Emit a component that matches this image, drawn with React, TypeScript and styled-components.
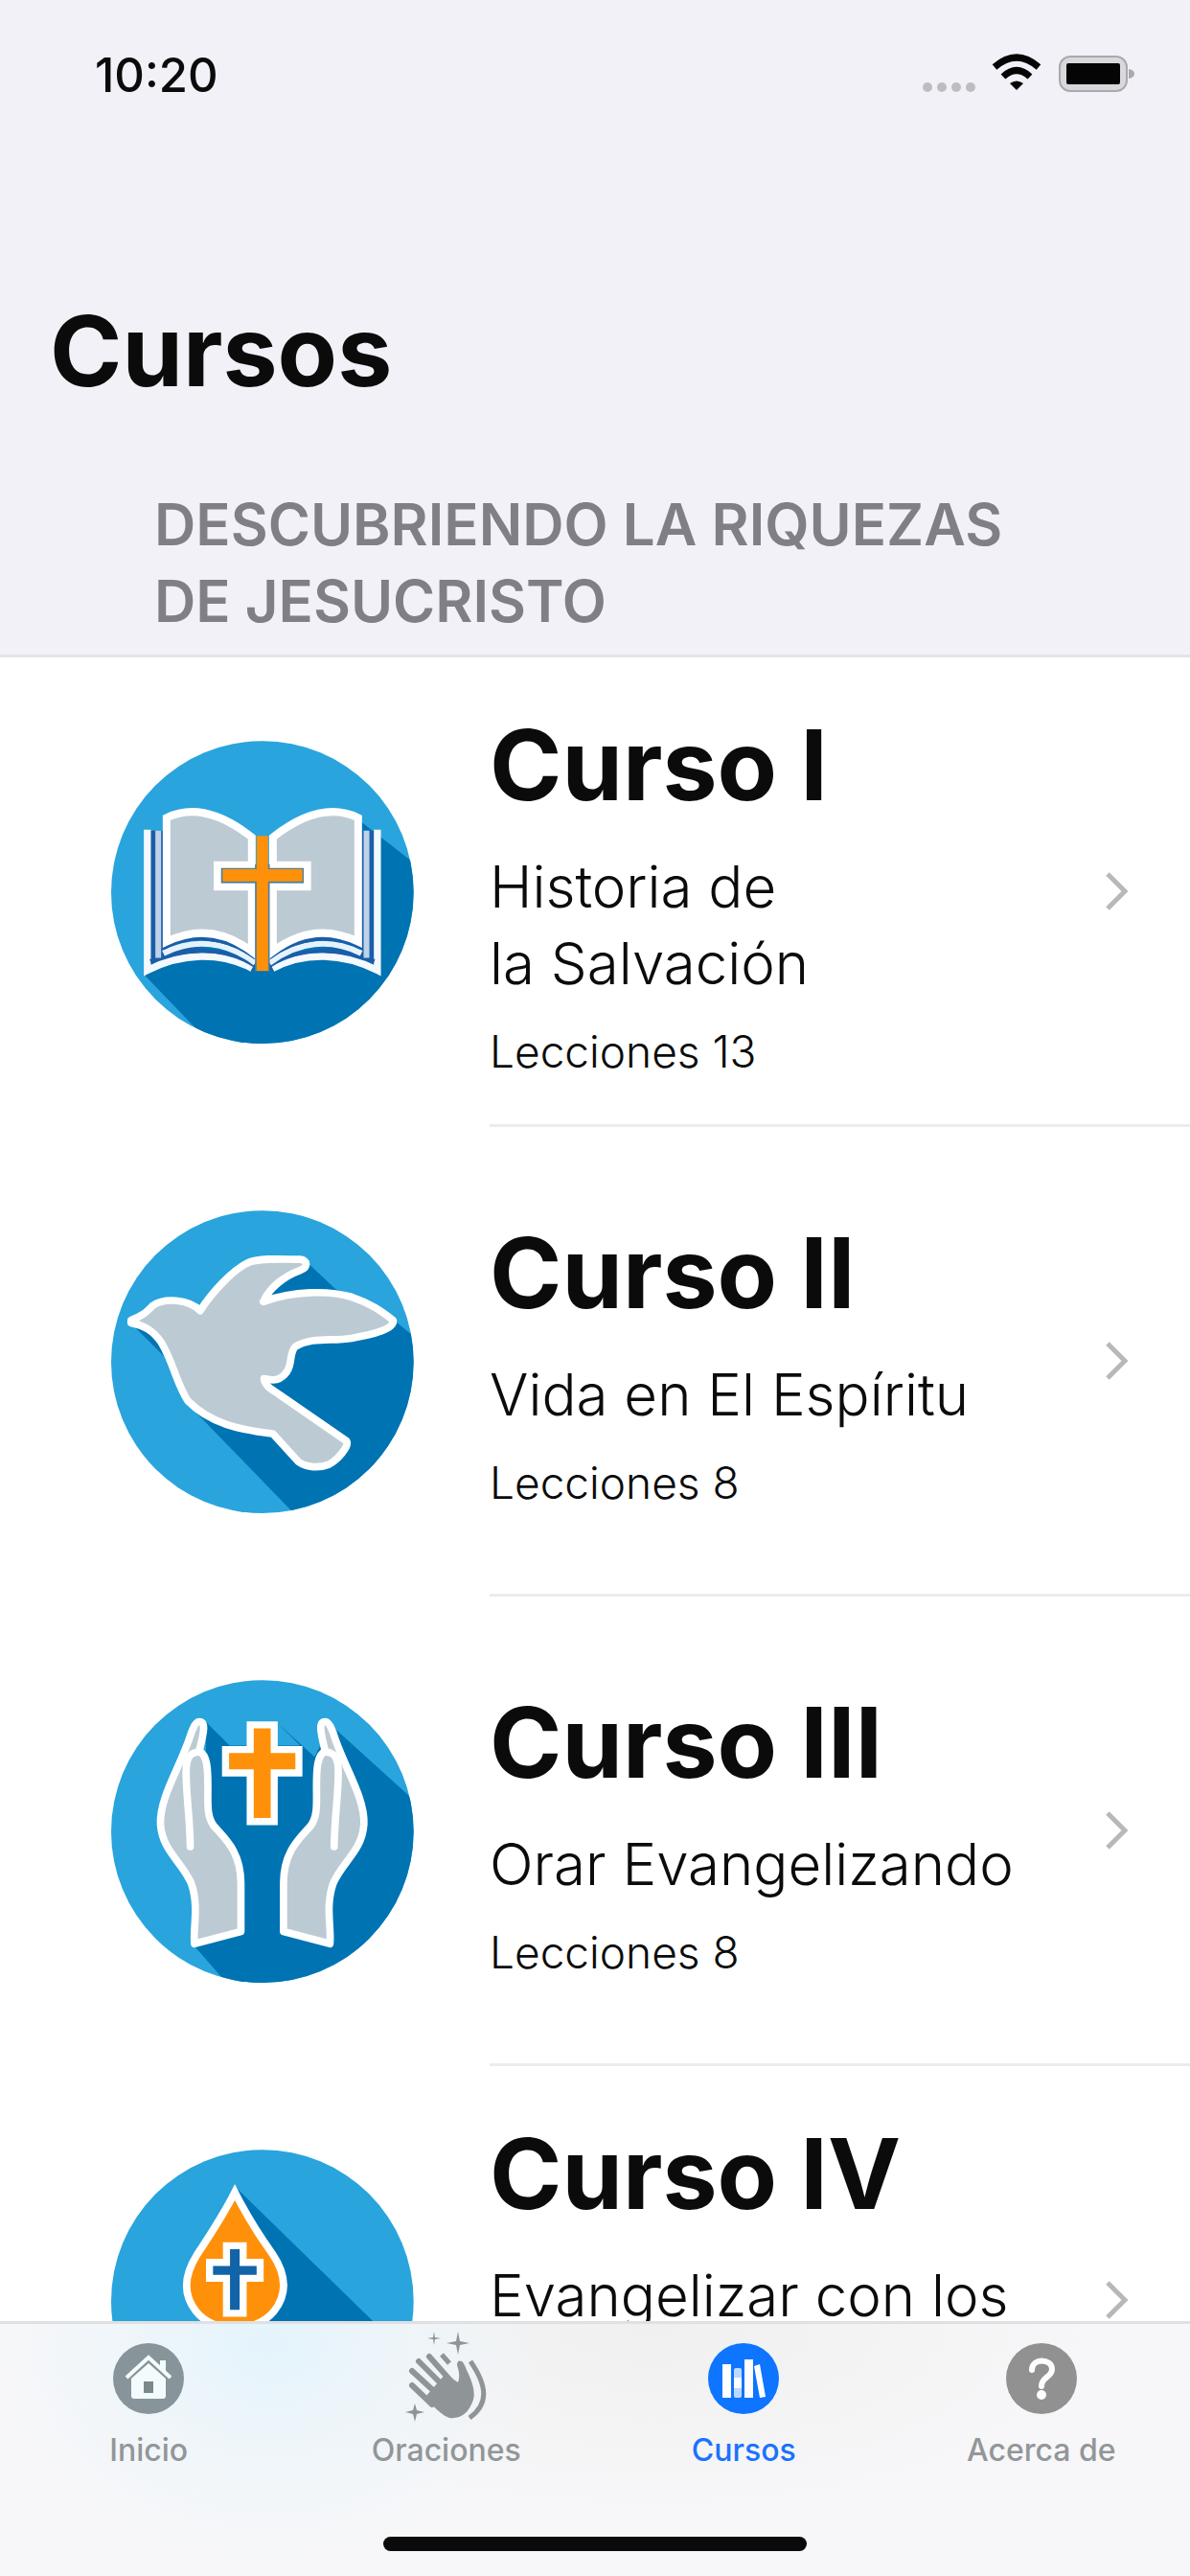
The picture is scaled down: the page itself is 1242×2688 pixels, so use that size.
import React from "react";
import styled, { createGlobalStyle } from "styled-components";

const Global = createGlobalStyle`
  * { box-sizing: border-box; }
  html, body, #root { height: 100%; margin: 0; }
  body {
    font-family: Inter, "Liberation Sans", sans-serif;
    color: #0b0b0b;
    background: #fff;
  }
  h1, h2, h3, p, ul { margin: 0; padding: 0; }
`;

const Screen = styled.div`
  height: 100vh;
  display: flex;
  flex-direction: column;
  overflow: hidden;
`;

const Header = styled.header`
  flex: none;
  background: #f2f1f7;
  border-bottom: 3px solid #e4e3ea;
`;

const StatusBar = styled.div`
  display: flex;
  justify-content: space-between;
  align-items: center;
  height: 158px;
  padding: 0 58px 0 99px;
`;

const Clock = styled.time`
  font-size: 49px;
  font-weight: 500;
  line-height: 60px;
`;

const StatusIcons = styled.div`
  display: flex;
  align-items: center;
  svg { display: block; }
`;

const Title = styled.h1`
  padding: 146px 52px 0;
  font-size: 102px;
  line-height: 124px;
  font-weight: 700;
`;

const SectionTitle = styled.h2`
  padding: 79px 161px 16px;
  font-size: 60px;
  line-height: 80px;
  font-weight: 600;
  text-transform: uppercase;
  color: #807f85;
`;

const Content = styled.main`
  flex: 1;
  min-height: 0;
  overflow: hidden;
  background: #fff;
`;

const List = styled.ul`
  list-style: none;
`;

const Row = styled.li`
  height: 490px;
`;

const RowLink = styled.a`
  display: flex;
  height: 100%;
  padding-left: 116px;
  align-items: center;
  gap: 79px;
  color: inherit;
  text-decoration: none;
`;

const Badge = styled.svg`
  flex: none;
  width: 316px;
  height: 316px;
`;

const RowBody = styled.div`
  flex: 1;
  min-width: 0;
  height: 100%;
  display: flex;
  align-items: center;
  justify-content: space-between;
  padding-right: 62px;
  border-bottom: 3px solid #ececec;
`;

const RowText = styled.div<{ $tall?: boolean }>`
  display: flex;
  flex-direction: column;
  gap: 22px;
  min-height: ${(p) => (p.$tall ? "394px" : "0")};
`;

const CourseTitle = styled.h3`
  font-size: 102px;
  line-height: 130px;
  font-weight: 700;
`;

const CourseName = styled.p`
  font-size: 60px;
  line-height: 80px;
  font-weight: 300;
  white-space: pre-line;
`;

const Lessons = styled.p`
  font-size: 46px;
  line-height: 60px;
  font-weight: 300;
`;

const TabBar = styled.nav`
  flex: none;
  border-top: 3px solid #dfe0e1;
  background:
    radial-gradient(ellipse 290px 230px at 280px 20px, #e4f4fc, rgba(236, 245, 250, 0.7) 50%, rgba(246, 247, 249, 0) 100%),
    radial-gradient(ellipse 480px 200px at 680px 0, #f0f0f0, rgba(247, 247, 248, 0) 100%),
    #f7f7f9;
`;

const Tabs = styled.div`
  display: grid;
  grid-template-columns: repeat(4, 1fr);
  height: 222px;
`;

const Tab = styled.button<{ $active?: boolean }>`
  display: flex;
  flex-direction: column;
  align-items: center;
  padding: 8px 0 0;
  border: 0;
  background: none;
  font-family: inherit;
  font-size: 32px;
  line-height: 40px;
  font-weight: 500;
  color: ${(p) => (p.$active ? "#1a72ff" : "#929698")};
  svg { display: block; width: 110px; height: 104px; }
`;

const HomeIndicator = styled.div`
  width: 442px;
  height: 15px;
  margin: 0 auto 26px;
  border-radius: 8px;
  background: #0a0a0a;
`;

const LIGHT = "#29a4dd";
const DARK = "#0073b3";
const GREY = "#bccad4";
const ORANGE = "#ff910a";

function BookHalf() {
  return (
    <>
      <path d="M170 345H215V700L505 735V785C400 735 270 735 170 770Z" fill="#1a5ea8" />
      <path d="M163 342V781C270 727 390 722 490 775" fill="none" stroke="#f4f9fe" strokeWidth="22" />
      <path d="M172 752C280 712 400 705 500 768" fill="none" stroke="#1a5ea8" strokeWidth="11" />
      <path d="M197 345V742" stroke="#bfd2e8" strokeWidth="18" />
      <path d="M213 728C310 680 410 690 500 758" fill="none" stroke="#e6f2fb" strokeWidth="18" />
      <path d="M213 712C300 665 410 675 500 742" fill="none" stroke="#1a5ea8" strokeWidth="12" />
      <path d="M223 305C300 268 390 288 489 366V453H382V520H489V722C400 655 310 650 223 692Z" fill={GREY} stroke="#fff" strokeWidth="24" />
    </>
  );
}

function BookBadge() {
  return (
    <Badge viewBox="50 65 945 945" aria-hidden="true">
      <clipPath id="book-clip"><circle cx="522" cy="538" r="472" /></clipPath>
      <g clipPath="url(#book-clip)">
        <rect x="50" y="65" width="945" height="945" fill={LIGHT} />
        <path d="M830 318 1000 450V1010H360L155 797 500 600Z" fill={DARK} />
        <BookHalf />
        <g transform="translate(1044 0) scale(-1 1)"><BookHalf /></g>
        <path d="M499 450h46v334h-46zM393 462h258v47H393z" fill="#4e7f9c" />
        <path d="M504 362H540V466H647V504H540V783H504V504H398V466H504Z" fill={ORANGE} />
      </g>
    </Badge>
  );
}

function DoveBadge() {
  return (
    <Badge viewBox="50 65 945 945" aria-hidden="true">
      <clipPath id="dove-clip"><circle cx="522" cy="538" r="472" /></clipPath>
      <g clipPath="url(#dove-clip)">
        <rect x="50" y="65" width="945" height="945" fill={LIGHT} />
        <path d="M120 425 215 520 300 680 620 1010H1010V470L935 410 750 310 665 230 520 350V420L230 470Z" fill={DARK} />
        <path d="M112 408C150 393 160 382 180 362C215 338 290 340 328 378C365 320 430 250 480 227C520 212 590 218 640 218C665 220 665 244 640 252C590 270 545 305 525 350C620 315 730 315 800 335C860 355 895 380 930 408C935 435 870 452 800 464C740 475 680 458 625 490C600 515 625 560 575 590C555 600 540 590 527 590C530 615 555 625 575 640L785 785C795 800 755 845 730 858C700 870 660 868 635 850L555 762C450 750 360 730 290 660C255 610 245 540 205 475C180 440 155 425 112 416Z" fill={GREY} stroke="#fff" strokeWidth="23" strokeLinejoin="round" />
      </g>
    </Badge>
  );
}

function Hand() {
  return (
    <>
      <path d="M325 195C345 195 342 220 325 287C350 300 352 340 352 400C352 450 348 490 370 520C405 560 455 600 455 700V850L310 888C305 840 325 770 300 700C270 630 210 600 204 515C200 430 270 330 300 230C308 210 315 195 325 195Z" fill={GREY} stroke="#fff" strokeWidth="23" strokeLinejoin="round" />
      <path d="M325 290C295 290 284 310 284 350C284 430 295 480 297 585" fill="none" stroke="#fff" strokeWidth="23" strokeLinecap="round" />
    </>
  );
}

function HandsBadge() {
  return (
    <Badge viewBox="50 65 945 945" aria-hidden="true">
      <clipPath id="hands-clip"><circle cx="522" cy="538" r="472" /></clipPath>
      <g clipPath="url(#hands-clip)">
        <rect x="50" y="65" width="945" height="945" fill={LIGHT} />
        <path d="M345 195 420 270H640L570 200 685 305 735 205 1000 445V1010H410L305 890 350 700Z" fill={DARK} />
        <Hand />
        <g transform="translate(1043 0) scale(-1 1)"><Hand /></g>
        <path d="M484 205H559V282H636V355H559V507H484V355H407V282H484Z" fill={ORANGE} stroke="#fff" strokeWidth="22" />
      </g>
    </Badge>
  );
}

function DropBadge() {
  return (
    <Badge viewBox="50 65 945 945" aria-hidden="true">
      <clipPath id="drop-clip"><circle cx="522" cy="538" r="472" /></clipPath>
      <g clipPath="url(#drop-clip)">
        <rect x="50" y="65" width="945" height="945" fill={LIGHT} />
        <path d="M436 180 1000 730V1010H700L340 600Z" fill={DARK} />
        <path d="M436 198C400 270 360 330 320 390C275 460 275 520 315 570C370 640 500 640 558 570C598 520 600 460 553 390C510 330 472 270 436 198Z" fill={ORANGE} stroke="#fff" strokeWidth="23" />
        <path d="M410 365H462V417H515V467H462V576H410V467H357V417H410Z" fill="#1263a8" stroke="#fff" strokeWidth="22" />
      </g>
    </Badge>
  );
}

function Chevron() {
  return (
    <svg width="28" height="42" viewBox="0 0 28 42" aria-hidden="true">
      <path d="M4 3 22 21 4 39" fill="none" stroke="#b8b8ba" strokeWidth="5" />
    </svg>
  );
}

function HomeIcon() {
  return (
    <svg viewBox="0 0 110 104" aria-hidden="true">
      <circle cx="55" cy="49" r="37" fill="#87959a" />
      <path d="M32 48 55 27 78 48" fill="none" stroke="#f4fbfd" strokeWidth="4" />
      <path d="M67 30h6v12l-6-6z" fill="#f4fbfd" />
      <path d="M55 33 73 49V67Q73 70 70 70H40Q37 70 37 67V49Z" fill="#f4fbfd" />
      <path d="M50 52h10v12H50z" fill="#7b888c" />
    </svg>
  );
}

function HandsIcon() {
  return (
    <svg viewBox="0 0 110 104" aria-hidden="true">
      <g fill="#8f9496">
        <path d="M42 0l1 6 6 1-6 1-1 6-1-6-6-1 6-1zM67 0l2 10 10 2-10 2-2 10-2-10-10-2 10-2zM22 75l2 7 8 2-8 2-2 8-2-8-8-2 8-2z" />
        <path d="M34 67 54 44 67 53Q70 46 66 35Q66 29 71 31Q73 32 76 40Q86 60 83 71Q76 92 58 90Q49 87 34 70Z" />
      </g>
      <g fill="none" stroke="#8f9496" strokeWidth="6" strokeLinecap="round">
        <path d="M19 56 40 76M19 41 44 64M26 31 51 56M37 26 60 52" />
      </g>
      <path d="M50 24 58 33M80 31C98 57 99 76 79 90" fill="none" stroke="#8f9496" strokeWidth="5" />
    </svg>
  );
}

function BooksIcon() {
  return (
    <svg viewBox="0 0 110 104" aria-hidden="true">
      <circle cx="55" cy="49" r="37" fill="#0d75ff" />
      <g fill="#fff">
        <path d="M33 34h9v35h-9zM56 29h9v40h-9zM66 36l6-2 6 34-6 1z" />
        <rect x="45" y="38" width="8" height="31" rx="2" fill="#bcd9ff" />
        <path d="M45 48h8v11h-8z" />
      </g>
    </svg>
  );
}

function HelpIcon() {
  return (
    <svg viewBox="0 0 110 104" aria-hidden="true">
      <circle cx="55" cy="49" r="37" fill="#919191" />
      <path d="M45 40C45 27 66 28 66 39C66 48 55 47 55 57" fill="none" stroke="#fff" strokeWidth="6" strokeLinecap="round" />
      <circle cx="55" cy="66" r="5" fill="#fff" />
    </svg>
  );
}

type Course = {
  title: string;
  name: string;
  lessons?: number;
  tall?: boolean;
  Art: () => React.JSX.Element;
};

const courses: Course[] = [
  { title: "Curso I", name: "Historia de\nla Salvación", lessons: 13, tall: true, Art: BookBadge },
  { title: "Curso II", name: "Vida en El Espíritu", lessons: 8, Art: DoveBadge },
  { title: "Curso III", name: "Orar Evangelizando", lessons: 8, Art: HandsBadge },
  { title: "Curso IV", name: "Evangelizar con los", tall: true, Art: DropBadge },
];

const tabs = [
  { label: "Inicio", Icon: HomeIcon },
  { label: "Oraciones", Icon: HandsIcon },
  { label: "Cursos", Icon: BooksIcon, active: true },
  { label: "Acerca de", Icon: HelpIcon },
];

export default function App() {
  return (
    <Screen>
      <Global />
      <Header>
        <StatusBar>
          <Clock>10:20</Clock>
          <StatusIcons>
            <svg width="222" height="46" viewBox="0 0 222 46" aria-hidden="true">
              <g fill="#bdbcc1">
                <circle cx="6" cy="35" r="5" /><circle cx="21" cy="35" r="5" />
                <circle cx="36" cy="35" r="5" /><circle cx="51" cy="35" r="5" />
              </g>
              <path d="M76 14Q99-6 122 14M85 24Q99 11 113 24" fill="none" stroke="#050505" strokeWidth="7" />
              <path d="M92 31Q99 26 106 31L99 38Z" fill="#050505" />
              <rect x="144" y="3" width="70" height="36" rx="11" fill="#d9d8dd" stroke="#aaaaae" strokeWidth="2" />
              <rect x="151" y="10" width="56" height="22" rx="2" fill="#050505" />
              <path d="M216 16Q222 17 222 21T216 26Z" fill="#aaaaae" />
            </svg>
          </StatusIcons>
        </StatusBar>
        <Title>Cursos</Title>
        <SectionTitle>Descubriendo la riquezas de Jesucristo</SectionTitle>
      </Header>
      <Content>
        <List>
          {courses.map(({ title, name, lessons, tall, Art }) => (
            <Row key={title}>
              <RowLink href="#">
                <Art />
                <RowBody>
                  <RowText $tall={tall}>
                    <CourseTitle>{title}</CourseTitle>
                    <CourseName>{name}</CourseName>
                    {lessons !== undefined && <Lessons>Lecciones {lessons}</Lessons>}
                  </RowText>
                  <Chevron />
                </RowBody>
              </RowLink>
            </Row>
          ))}
        </List>
      </Content>
      <TabBar>
        <Tabs>
          {tabs.map(({ label, Icon, active }) => (
            <Tab key={label} type="button" $active={active}>
              <Icon />
              {label}
            </Tab>
          ))}
        </Tabs>
        <HomeIndicator />
      </TabBar>
    </Screen>
  );
}
